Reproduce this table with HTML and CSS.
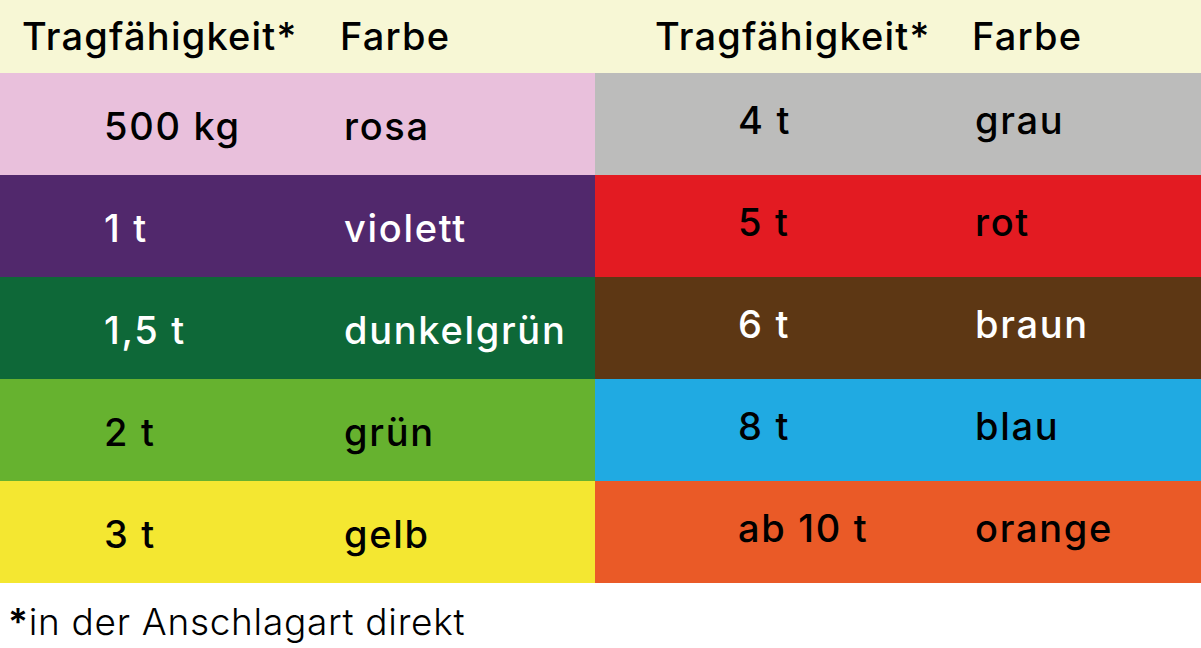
FILE: index.html
```html
<!DOCTYPE html>
<html lang="de">
<head>
<meta charset="utf-8">
<title>Tragfähigkeit Farben</title>
<link rel="stylesheet" href="styles.css">
</head>
<body>
<div class="sheet">
  <div class="table">
    <div class="head head-left"><span class="h-val">Tragfähigkeit*</span><span>Farbe</span></div>
    <div class="head head-right"><span class="h-val">Tragfähigkeit*</span><span>Farbe</span></div>

    <div class="cell left rosa"><span class="val">500 kg</span><span>rosa</span></div>
    <div class="cell right grau"><span class="val">4 t</span><span>grau</span></div>

    <div class="cell left violett light"><span class="val">1 t</span><span>violett</span></div>
    <div class="cell right rot"><span class="val">5 t</span><span>rot</span></div>

    <div class="cell left dunkelgruen light"><span class="val">1,5 t</span><span>dunkelgrün</span></div>
    <div class="cell right braun light"><span class="val">6 t</span><span>braun</span></div>

    <div class="cell left gruen"><span class="val">2 t</span><span>grün</span></div>
    <div class="cell right blau"><span class="val">8 t</span><span>blau</span></div>

    <div class="cell left gelb"><span class="val">3 t</span><span>gelb</span></div>
    <div class="cell right orange"><span class="val">ab 10 t</span><span>orange</span></div>
  </div>
  <p class="note"><span class="star">*</span>in der Anschlagart direkt</p>
</div>
</body>
</html>
```

FILE: styles.css
```css
html, body {
  margin: 0;
  padding: 0;
  background: #ffffff;
}

body {
  font-family: "Inter", "Open Sans", "DejaVu Sans", sans-serif;
  color: #000000;
}

.sheet {
  width: 1201px;
}

.table {
  display: grid;
  grid-template-columns: 595px 606px;
  grid-template-rows: 73px repeat(5, 102px);
}

.head {
  background: #f7f7d5;
  display: flex;
  align-items: center;
  font-size: 38px;
  font-weight: 500;
  letter-spacing: 1.2px;
  padding-bottom: 2px;
  box-sizing: border-box;
  white-space: nowrap;
}

.head-left {
  padding-left: 22px;
}

.head-left .h-val {
  width: 318px;
}

.head-right {
  padding-left: 60px;
}

.head-right .h-val {
  width: 317px;
}

.cell {
  display: flex;
  align-items: center;
  font-size: 38px;
  font-weight: 500;
  letter-spacing: 1.7px;
  box-sizing: border-box;
  white-space: nowrap;
}

.cell.left {
  padding-left: 104px;
  padding-top: 3px;
}

.cell.left .val {
  width: 240px;
}

.cell.right {
  padding-left: 143px;
  padding-bottom: 9px;
}

.cell.right .val {
  width: 237px;
}

.light {
  color: #ffffff;
}

.rosa { background: #e9c0dc; }
.grau { background: #bcbcbb; }
.violett { background: #51286c; }
.rot { background: #e31b22; }
.dunkelgruen { background: #0e6838; }
.braun { background: #5d3714; }
.gruen { background: #66b22f; }
.blau { background: #20aae2; }
.gelb { background: #f4e731; }
.orange { background: #ea5a27; }

.note {
  margin: 0;
  padding: 17px 0 0 8px;
  font-size: 37px;
  font-weight: 300;
  line-height: 44px;
  letter-spacing: 0.7px;
  white-space: nowrap;
}

.star {
  font-weight: 600;
}
```
